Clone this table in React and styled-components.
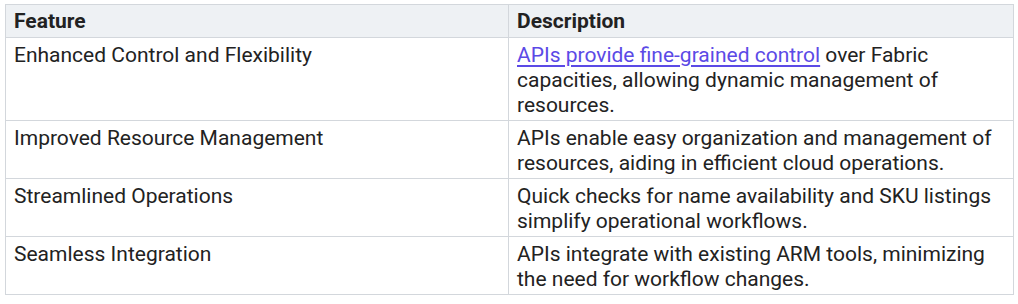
import React from "react";
import styled, { createGlobalStyle } from "styled-components";

const Global = createGlobalStyle`
  html, body { margin: 0; padding: 0; background: #ffffff; }
  body { font-family: Roboto, "Noto Sans", Arial, sans-serif; }
`;

const Page = styled.div`
  padding: 4px 5px 0 5px;
`;

const Table = styled.table`
  width: 1008px;
  border-collapse: collapse;
  table-layout: fixed;
  font-family: Roboto, "Noto Sans", Arial, sans-serif;
  font-size: 21px;
  line-height: 25px;
  color: #222222;
`;

const HeadCell = styled.th`
  background: #eef1f4;
  border: 1px solid #d3d7dc;
  text-align: left;
  font-weight: 700;
  padding: 4px 7px 3px 8px;
  vertical-align: top;
`;

const Cell = styled.td`
  border: 1px solid #d3d7dc;
  padding: 5px 7px 2px 8px;
  vertical-align: top;
`;

const Link = styled.a`
  color: #5b4ae6;
  text-decoration: underline;
  text-underline-offset: 3px;
`;

const rows = [
  {
    feature: "Enhanced Control and Flexibility",
    desc: (
      <>
        <Link href="#">APIs provide fine-grained control</Link> over Fabric
        capacities, allowing dynamic management of resources.
      </>
    ),
  },
  {
    feature: "Improved Resource Management",
    desc: "APIs enable easy organization and management of resources, aiding in efficient cloud operations.",
  },
  {
    feature: "Streamlined Operations",
    desc: "Quick checks for name availability and SKU listings simplify operational workflows.",
  },
  {
    feature: "Seamless Integration",
    desc: "APIs integrate with existing ARM tools, minimizing the need for workflow changes.",
  },
];

export default function App() {
  return (
    <Page>
      <Global />
      <Table>
        <colgroup>
          <col style={{ width: "503px" }} />
          <col style={{ width: "505px" }} />
        </colgroup>
        <thead>
          <tr>
            <HeadCell>Feature</HeadCell>
            <HeadCell>Description</HeadCell>
          </tr>
        </thead>
        <tbody>
          {rows.map((r) => (
            <tr key={r.feature}>
              <Cell>{r.feature}</Cell>
              <Cell>{r.desc}</Cell>
            </tr>
          ))}
        </tbody>
      </Table>
    </Page>
  );
}
